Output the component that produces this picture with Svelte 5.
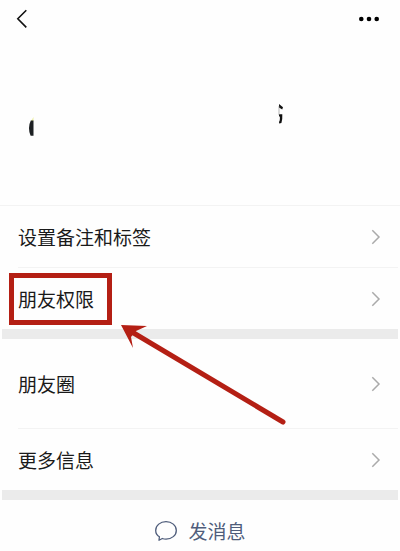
<script>
	const groups = [
		[
			{ label: '设置备注和标签' },
			{ label: '朋友权限', marked: true }
		],
		[
			{ label: '朋友圈', tall: true },
			{ label: '更多信息' }
		]
	]
</script>

<main>
	<header>
		<button class="icon" aria-label="返回">
			<svg width="12" height="20" viewBox="0 0 12 20">
				<path d="M10.3 1.2 L1.8 9.8 L10.3 18.4" fill="none" stroke="#111" stroke-width="1.6" />
			</svg>
		</button>
		<button class="icon" aria-label="更多">
			<svg width="20" height="6" viewBox="0 0 20 6">
				<circle cx="2.3" cy="3" r="2.3" />
				<circle cx="10" cy="3" r="2.3" />
				<circle cx="17.7" cy="3" r="2.3" />
			</svg>
		</button>
	</header>

	<section class="profile">
		<svg class="avatar" width="8" height="22" viewBox="0 0 8 22">
			<path d="M3 4 L5.5 0 V4 Z" fill="#eef0a8" />
			<path d="M5.5 3.5 H2.8 Q1 7 1 11 Q1 16 2.6 18.8 H5.5 Z" fill="#1d2023" />
		</svg>
		<svg class="name" width="8" height="22" viewBox="0 0 8 22">
			<path d="M2 1 L6 4.2 L5.2 6.4 L2 4.4 Z M2 11.2 H5.3 Q5.6 17 4.4 20 L2.2 20.6 L2 18.8 Q3 18 2.9 13.4 H2 Z" fill="#111" />
			<path d="M2 3 V12" stroke="#888" stroke-width=".6" />
		</svg>
	</section>

	{#each groups as rows}
		<section class="group">
			{#each rows as row}
				<button class="row" class:tall={row.tall}>
					<span class:marked={row.marked}>{row.label}</span>
					<svg width="10" height="16" viewBox="0 0 10 16">
						<path d="M1.3 1.3 L8 8 L1.3 14.7" fill="none" stroke="#aaa" stroke-width="1.5" />
					</svg>
					{#if row.marked}
						<svg class="arrow" width="170" height="104" viewBox="0 0 170 104">
							<path d="M12 8 L163 98" stroke="#b41f14" stroke-width="5" stroke-linecap="round" />
							<path d="M1 1 L27 2 L16 7 L11 13 L13 24 Z" fill="#b41f14" />
						</svg>
					{/if}
				</button>
			{/each}
		</section>
	{/each}

	<button class="message">
		<svg width="24" height="22" viewBox="0 0 24 22">
			<path d="M5.4 16.8 C3 15.2 1.7 12.9 1.7 10.4 C1.7 5.4 6.3 1.6 12 1.6 S22.3 5.4 22.3 10.4 S17.7 19.1 12 19.1 C10.6 19.1 9.4 18.9 8.3 18.5 L5 20.3 Z" fill="none" stroke="#4f5d7b" stroke-width="1.3" stroke-linejoin="round" />
		</svg>
		发消息
	</button>
</main>

<style>
	:global(body){
		margin:0;
		background:#fefefe;
	}
	main{
		font-family:"Noto Sans CJK SC", sans-serif;
		color:#1a1a1a;
	}
	button{
		border:0;
		padding:0;
		background:none;
		color:inherit;
		font:inherit;
		cursor:pointer;
	}
	svg{
		display:block;
		flex:none;
	}
	header{
		display:flex;
		justify-content:space-between;
		align-items:center;
		height:37px;
		padding:0 21px 0 16px;
	}
	.profile{
		display:flex;
		align-items:flex-start;
		justify-content:space-between;
		height:102px;
		padding:66px 115px 0 28px;
		border-bottom:1px solid #f3f3f3;
	}
	.avatar{
		margin-top:14px;
	}
	.group{
		border-bottom:10px solid #ebebeb;
		margin:0 2px;
	}
	.row{
		position:relative;
		display:flex;
		align-items:center;
		justify-content:space-between;
		width:100%;
		height:61px;
		padding:0 17px 0 16px;
		font-size:19px;
		line-height:28px;
		text-align:left;
	}
	.row + .row{
		margin-top:1px;
	}
	.row + .row::before{
		content:"";
		position:absolute;
		top:-1px;
		left:16px;
		right:0;
		border-top:1px solid #f3f3f3;
	}
	.tall{
		height:89px;
	}
	.marked{
		position:relative;
	}
	.marked::after{
		content:"";
		position:absolute;
		inset:-12px -18px -12px -9px;
		border:5px solid #b41f14;
	}
	.arrow{
		position:absolute;
		top:56px;
		left:118px;
		z-index:1;
		pointer-events:none;
	}
	.message{
		display:flex;
		align-items:center;
		justify-content:center;
		gap:10px;
		width:100%;
		height:61px;
		color:#4f5d7b;
		font-size:19px;
		line-height:28px;
	}
</style>
